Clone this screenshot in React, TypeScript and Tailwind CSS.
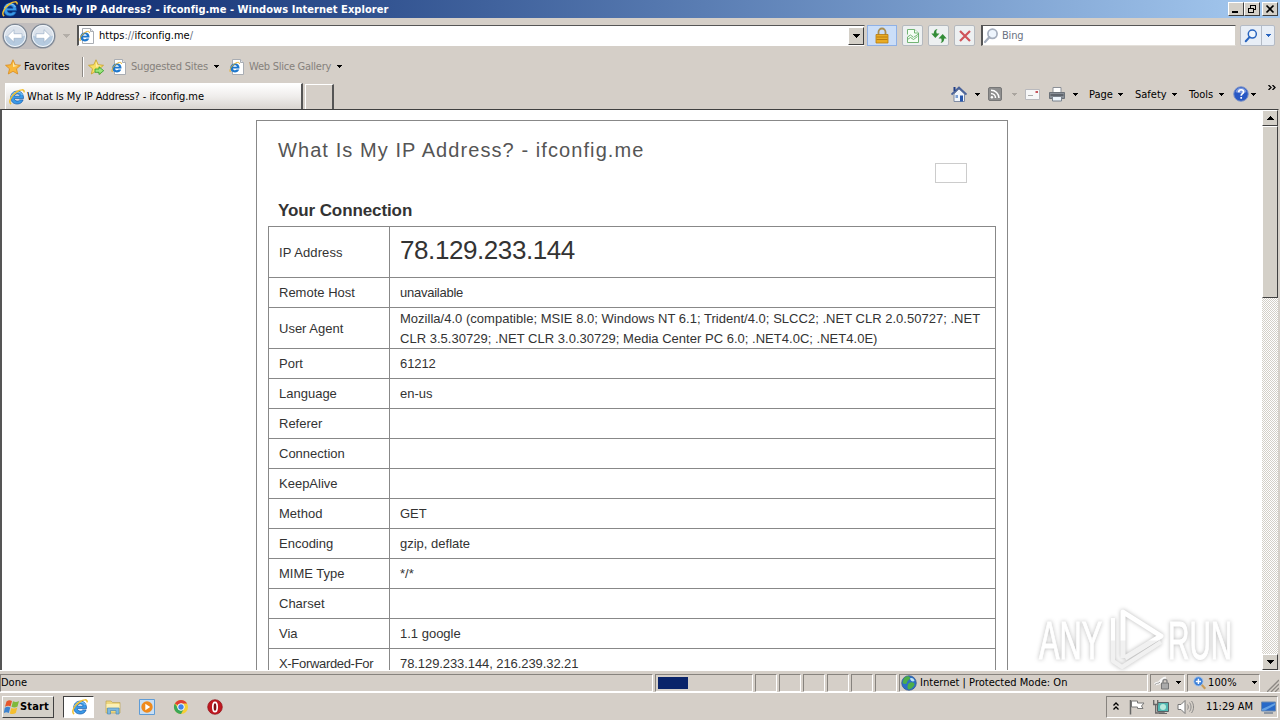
import React from 'react';

const rows = [
  { label: 'Remote Host', value: 'unavailable', valueClass: 'tracking-[-0.25px]' },
  {
    label: 'User Agent',
    value:
      'Mozilla/4.0 (compatible; MSIE 8.0; Windows NT 6.1; Trident/4.0; SLCC2; .NET CLR 2.0.50727; .NET CLR 3.5.30729; .NET CLR 3.0.30729; Media Center PC 6.0; .NET4.0C; .NET4.0E)',
    valueClass: 'tracking-[0.02px]',
    tall: true
  },
  { label: 'Port', value: '61212', valueClass: 'tracking-[-0.1px]' },
  { label: 'Language', value: 'en-us' },
  { label: 'Referer', value: '' },
  { label: 'Connection', value: '' },
  { label: 'KeepAlive', value: '' },
  { label: 'Method', value: 'GET' },
  { label: 'Encoding', value: 'gzip, deflate' },
  { label: 'MIME Type', value: '*/*' },
  { label: 'Charset', value: '' },
  { label: 'Via', value: '1.1 google' },
  {
    label: 'X-Forwarded-For',
    value: '78.129.233.144, 216.239.32.21',
    labelClass: 'tracking-[-0.32px]',
    valueClass: 'tracking-[-0.08px]'
  }
];

const IELogo = ({ className = '' }: { className?: string }) => (
  <svg viewBox="0 0 16 16" className={`shrink-0 ${className}`}>
    <path d="M14.500 9.600H5.300c.2 1.600 1.400 2.500 3 2.500 1.100 0 1.900-.4 2.400-1.200h3.400c-.9 2.700-3 4.100-5.900 4.100-3.900 0-6.500-2.600-6.500-6.400s2.700-6.500 6.600-6.500c4 0 6.400 2.900 6.200 7.500zM5.500 7.200H11C10.800 5.700 9.800 4.900 8.300 4.900S5.700 5.700 5.500 7.200z" fill="#3a9ae8" stroke="#1458a8" strokeWidth=".7" />
    <path d="M2.500 7c.8-2.600 2.900-4 5.700-4 2.500 0 4.200 1 5.200 3" fill="none" stroke="#8fd0fa" />
    <path d="M2.200 15C-1 13.500 2 6.500 7.500 3 11.500.4 15.800-.2 15 3.400" fill="none" stroke="#f1bf30" strokeWidth="1.500" />
  </svg>
);

const IEPage = () => (
  <svg viewBox="0 0 16 16" className="w-4 h-4 shrink-0">
    <path d="M3.500.5h8l3 3v12h-11z" fill="#fff" stroke="#a9adb3" />
    <path d="M11.500.5v3h3" fill="#e4e7ec" stroke="#a9adb3" />
    <path d="M10.500 9.500H4c.1 1.200.9 1.800 1.900 1.800.8 0 1.300-.3 1.600-.8h2.700c-.6 1.900-2.200 2.900-4.300 2.900-2.800 0-4.700-1.700-4.700-4.400s1.900-4.500 4.800-4.500c2.900 0 4.700 1.900 4.500 5zM4.100 7.800h3.800c-.1-.9-.8-1.500-1.900-1.500S4.300 6.900 4.100 7.800z" fill="#1f78cc" />
    <path d="M1.300 13C0 10.500 3 6 7 3.900c2-.9 3.800-.7 3.400 1" fill="none" stroke="#e6b02a" />
  </svg>
);

const Caret = ({ className = '' }: { className?: string }) => (
  <svg viewBox="0 0 5 3" className={`w-[5px] h-[3px] shrink-0 ${className}`} shapeRendering="crispEdges">
    <path d="M0 0h5v1H4v1H3v1H2V2H1V1H0z" fill="currentColor" />
  </svg>
);

const WideCaret = ({ className = '' }: { className?: string }) => (
  <svg viewBox="0 0 7 4" className={`w-[7px] h-1 shrink-0 ${className}`} shapeRendering="crispEdges">
    <path d="M0 0h7v1H6v1H5v1H4v1H3V3H2V2H1V1H0z" fill="currentColor" />
  </svg>
);

const NavCircle = ({ flip = false }: { flip?: boolean }) => (
  <svg viewBox="0 0 26 26" className={`w-[26px] h-[26px] shrink-0 ${flip ? '-scale-x-100' : ''}`}>
    <circle cx="13" cy="13" r="11.700" fill="#b5cadf" stroke="#7e8793" strokeWidth="1.200" />
    <path d="M2.500 12.500a10.500 10.500 0 0 1 21 0c-6 2.500-15 2.500-21 0z" fill="#dbe2eb" />
    <circle cx="13" cy="13" r="10.500" fill="none" stroke="#f4f7fa" />
    <path d="M5.500 13l6.500-6.300v4h8v4.600h-8v4z" fill="#fff" stroke="#9eb2c8" strokeWidth=".7" />
  </svg>
);

const Star = ({ arrow = false }: { arrow?: boolean }) => (
  <svg viewBox="0 0 16 16" className="w-4 h-4 shrink-0">
    <path d="M8 .8l2.200 4.900 5.300.6-4 3.500 1.200 5.200L8 12.300 3.300 15l1.200-5.200-4-3.500 5.300-.6z" fill={arrow ? '#f7df62' : '#f9b73a'} stroke={arrow ? '#c5a02a' : '#d98a1e'} strokeWidth=".8" />
    <path d="M8 2.500l1.500 3.800 3.500.5-5 1.200z" fill="#fde9a8" />
    {arrow && <path d="M7 10h4V7.800l4.700 3.900L11 15.500v-2.200H7z" fill="#9be57c" stroke="#2d9a2a" strokeWidth=".8" />}
  </svg>
);

const Glass = ({ className = '' }: { className?: string }) => (
  <svg viewBox="0 0 16 16" className={`w-4 h-4 shrink-0 ${className}`} fill="none" stroke="currentColor">
    <circle cx="9.500" cy="5.800" r="4.600" strokeWidth="1.700" fill="#eef5fd" />
    <path d="M6.300 9.200L2 14" strokeWidth="2.300" strokeLinecap="round" />
  </svg>
);

const ToolButton = ({ children }: { children: React.ReactNode }) => (
  <div className="w-[21px] h-[21px] ml-[5px] shrink-0 flex items-center justify-center rounded-[2px] border border-[#b5b9be] bg-[#edf0f1]">
    {children}
  </div>
);

const TitleBar = () => (
  <div className="h-[18px] shrink-0 flex items-center pl-[2px] pr-[2px] bg-linear-to-r from-[#0a246a] to-[#a6caf0]">
    <IELogo className="w-4 h-4" />
    <span className="ml-[2px] pt-px text-[11px] leading-[17px] font-bold text-white tracking-[0.045px] whitespace-nowrap">
      What Is My IP Address? - ifconfig.me - Windows Internet Explorer
    </span>
    <div className="ml-auto flex">
      {['min', 'max', 'close'].map((kind) => (
        <div
          key={kind}
          className={`w-4 h-[14px] bg-[#d4d0c8] border border-t-white border-l-white border-b-[#404040] border-r-[#404040] ${kind === 'close' ? 'ml-[2px]' : ''}`}
        >
          <svg viewBox="0 0 14 12" className="w-[14px] h-3" fill="none" stroke="#000" shapeRendering="crispEdges">
            {kind === 'min' && <path d="M3 9h6" strokeWidth="2" />}
            {kind === 'max' && <path d="M5 2h6M5.500 2v3M10.500 2v5M8 6.500h3M3 5h6M3.500 5v5M8.500 5v5M3 9.500h6" />}
            {kind === 'close' && <path d="M3.500 2.500l7 7M10.500 2.500l-7 7" strokeWidth="1.700" shapeRendering="auto" />}
          </svg>
        </div>
      ))}
    </div>
  </div>
);

const AddressRow = () => (
  <div className="h-[35px] shrink-0 flex items-center pl-[2px] pr-[6px]">
    <div className="flex gap-[2px] rounded-full bg-[#c1bdbd]">
      <NavCircle />
      <NavCircle flip />
    </div>
    <WideCaret className="ml-[7px] text-[#b3aea8]" />
    <div className="ml-[7px] w-[788px] h-[21px] shrink-0 flex items-center bg-white border border-t-[#555] border-l-2 border-l-[#555] border-b-white border-r-[#d4d0c8]">
      <IEPage />
      <span className="ml-1 pt-[2px] text-[11px] tracking-[-0.01px]">
        https<span className="text-gray-500">://</span>ifconfig.me<span className="text-gray-500">/</span>
      </span>
      <div className="ml-auto w-4 h-[18px] flex items-center justify-center bg-[#d4d0c8] border border-t-white border-l-white border-b-[#404040] border-r-[#404040]">
        <WideCaret />
      </div>
    </div>
    <div className="ml-[2px] w-[30px] h-[21px] shrink-0 flex items-center justify-center border border-[#8fb1e6] bg-[#cbdef8]">
      <svg viewBox="0 0 16 18" className="w-4 h-[18px]">
        <path d="M4.500 8V5a3.500 3.500 0 0 1 7 0v3" fill="none" stroke="#a98e53" strokeWidth="1.800" />
        <path d="M2 7.500h12V16H2z" fill="#e9ac25" stroke="#b67b12" strokeWidth=".8" />
        <path d="M2.500 10h11M2.500 12.500h11" stroke="#b97c10" />
      </svg>
    </div>
    <ToolButton>
      <svg viewBox="0 0 14 16" className="w-[14px] h-4" fill="#f6fff5" stroke="#64ab65" strokeWidth=".9">
        <path d="M1.500 6.500v-5h7l4 3.500v3" />
        <path d="M8.500 1.500V5h4" />
        <path d="M1.500 9l3-2 3 2.500L12.500 6v8.500h-11z" />
        <path d="M1.500 11.500l3-2 3 2 4-3" />
      </svg>
    </ToolButton>
    <ToolButton>
      <svg viewBox="0 0 16 16" className="w-4 h-4 shrink-0" fill="#328c37">
        <path d="M6.500 1C4.900 2.500 5.200 4 5.800 5.500h2.700L4.300 10 .3 5.500h2.500C2.600 3.200 4 1.500 6.500 1z" />
        <path d="M9.500 15c1.600-1.500 1.300-3 .7-4.500H7.500L11.700 6l4 4.500h-2.500c.2 2.300-1.200 4-3.700 4.500z" />
      </svg>
    </ToolButton>
    <ToolButton>
      <svg viewBox="0 0 14 14" className="w-[14px] h-[14px]">
        <path d="M2 2l10 10M12 2L2 12" stroke="#d0545a" strokeWidth="2.200" />
      </svg>
    </ToolButton>
    <div className="ml-[6px] w-[255px] h-[21px] shrink-0 flex items-center bg-white border border-t-[#555] border-l-2 border-l-[#555] border-b-[#e4e0da] border-r-[#d4d0c8]">
      <Glass className="text-[#a5aebd]" />
      <span className="ml-[3px] pt-[2px] text-[11px] text-gray-500 tracking-[-0.2px]">Bing</span>
    </div>
    <div className="ml-[4px] w-[35px] h-[21px] shrink-0 flex rounded-[2px] border border-[#b4bbc6] bg-[#e8eef6] text-[#2864bf]">
      <div className="w-[21px] flex items-center justify-center border-r border-[#b4bbc6]">
        <Glass className="w-[14px] h-[14px]" />
      </div>
      <div className="flex-1 flex items-center justify-center">
        <Caret />
      </div>
    </div>
  </div>
);

const FavoritesRow = () => (
  <div className="h-[27px] shrink-0 flex items-center pl-[5px] text-[11px]">
    <Star />
    <span className="ml-[3px] pt-px w-[46px] tracking-[0.1px] whitespace-nowrap">Favorites</span>
    <div className="ml-[12px] w-[2px] h-5 border-l border-[#8d8984] bg-white" />
    <div className="ml-1">
      <Star arrow />
    </div>
    <div className="ml-[7px] flex items-center text-[#85817c]">
      <IEPage />
      <span className="ml-[4px] pt-[2px] w-[78px] whitespace-nowrap tracking-[-0.2px]">Suggested Sites</span>
      <Caret className="ml-[5px] text-black" />
      <div className="w-[10px]" />
      <IEPage />
      <span className="ml-[4px] pt-[2px] w-[82px] whitespace-nowrap tracking-[-0.25px]">Web Slice Gallery</span>
      <Caret className="ml-[6px] text-black" />
    </div>
  </div>
);

const TabRow = () => (
  <div className="h-[29px] shrink-0 flex items-start pl-[5px] pt-[3px] text-[11px]">
    <div className="w-[298px] h-[26px] flex items-center pl-[3px] bg-linear-to-b from-white via-[#efedeb] to-[#d9d5d0] border-t border-l border-white border-r-2 border-r-[#555]">
      <IELogo className="w-4 h-4" />
      <span className="ml-[2px] pt-px whitespace-nowrap tracking-[-0.08px]">What Is My IP Address? - ifconfig.me</span>
    </div>
    <div className="ml-[2px] mt-[1px] w-[29px] h-[25px] border-t border-l border-white border-r-2 border-r-[#555]" />
    <div className="ml-auto h-[22px] flex items-center">
      <svg viewBox="0 0 16 16" className="w-4 h-4">
        <path d="M3 8v7.500h10.500V8L8 3z" fill="#f1f5fb" stroke="#7f8ba3" />
        <path d="M.5 8.500L8 1.500l7.500 7" fill="none" stroke="#49629a" strokeWidth="1.800" />
        <path d="M2.500 1h2v4h-2z" fill="#1f3d86" />
        <path d="M9 9.500h3v6H9z" fill="#2756ac" />
        <path d="M4.500 9h2.500v3H4.500z" fill="#7ca0d5" />
      </svg>
      <Caret className="ml-2" />
      <svg viewBox="0 0 14 14" className="ml-2 w-[14px] h-[14px]">
        <rect x=".5" y=".5" width="13" height="13" rx="1.500" fill="#8f8f8f" stroke="#777" />
        <path d="M3 6.500a4.500 4.500 0 0 1 4.500 4.500M3 3.200a8 8 0 0 1 8 7.800" fill="none" stroke="#fff" strokeWidth="1.500" />
        <circle cx="3.900" cy="10.200" r="1.200" fill="#fff" />
      </svg>
      <Caret className="ml-[10px] text-[#aaa59f]" />
      <svg viewBox="0 0 15 11" className="ml-2 w-[15px] h-[11px]">
        <path d="M.5.500h14v10H.5z" fill="#f7f7f8" stroke="#b9b9bd" />
        <path d="M10.500 2h2.500v2h-2.500z" fill="#c6545c" />
        <path d="M3 6.500h5" stroke="#aaa" />
      </svg>
      <svg viewBox="0 0 16 16" className="ml-[9px] w-4 h-4">
        <path d="M4 7V1.500h8V7" fill="#fff" stroke="#8b8f96" />
        <path d="M.5 6.500h15v6H.5z" fill="#8a9098" stroke="#6b7178" />
        <path d="M1.500 9h13" stroke="#50565e" strokeWidth="1.500" />
        <path d="M3.500 10.500h9v4.500h-9z" fill="#eef5fc" stroke="#7a828c" />
      </svg>
      <Caret className="ml-2" />
      <span className="ml-[11px] pt-[2px] w-[25px]">Page</span>
      <Caret className="ml-[4px]" />
      <span className="ml-[12px] pt-[2px] w-[33px]">Safety</span>
      <Caret className="ml-[4px]" />
      <span className="ml-[12px] pt-[2px] w-[26px]">Tools</span>
      <Caret className="ml-[4px]" />
      <svg viewBox="0 0 16 16" className="ml-[9px] w-4 h-4">
        <circle cx="8" cy="8" r="7.300" fill="#2858c4" stroke="#8296c7" />
        <path d="M2.500 6a5.700 5.700 0 0 1 11 0c-3 1.500-8 1.500-11 0z" fill="#7897df" />
        <path d="M5.700 6.200c0-3.200 4.900-3.200 4.900-.3 0 1.800-2.400 1.800-2.400 3.800M8.200 11v1.800" fill="none" stroke="#fff" strokeWidth="1.700" />
      </svg>
      <Caret className="ml-[2px]" />
      <svg viewBox="0 0 8 5" className="ml-[12px] mr-1 mb-[13px] w-2 h-[5px]" fill="none" stroke="#000" strokeWidth="1.300">
        <path d="M.5 0L3 2.500.5 5M4.500 0L7 2.500 4.500 5" />
      </svg>
    </div>
  </div>
);

const ScrollButton = ({ up = false }: { up?: boolean }) => (
  <div className="h-4 shrink-0 flex items-center justify-center bg-[#d4d0c8] border border-t-white border-l-white border-b-[#404040] border-r-[#404040]">
    <WideCaret className={up ? 'rotate-180' : ''} />
  </div>
);

const Scrollbar = () => (
  <div className="w-4 shrink-0 flex flex-col bg-[repeating-conic-gradient(#ffffff_0_25%,#d4d0c8_0_50%)] bg-[length:2px_2px]">
    <ScrollButton up />
    <div className="h-[172px] shrink-0 bg-[#d4d0c8] border border-t-white border-l-white border-b-[#404040] border-r-[#404040]" />
    <div className="flex-1" />
    <ScrollButton />
  </div>
);

const Watermark = () => (
  <svg viewBox="0 0 210 75" className="absolute left-[1030px] top-[600px] w-[210px] h-[75px] drop-shadow-[0_0_2px_rgba(0,0,0,0.28)]">
    <defs>
      <linearGradient id="wm" x1="0" y1="0" x2="0" y2="75" gradientUnits="userSpaceOnUse">
        <stop offset="0.53" stopColor="#ffffff" />
        <stop offset="0.55" stopColor="#f1f1f1" />
      </linearGradient>
    </defs>
    <g fill="url(#wm)" stroke="url(#wm)" strokeWidth="1" className="font-['Liberation_Sans']" fontSize="53">
      <text transform="translate(9 59) scale(.58 1)">ANY</text>
      <text transform="translate(138 59) scale(.56 1)">RUN</text>
    </g>
    <g fill="none" stroke="url(#wm)" strokeLinejoin="round">
      <path d="M83 18v43l9 6 39-25" strokeWidth="4" />
      <path d="M93 58V12l38 24-36 22" strokeWidth="5" />
    </g>
  </svg>
);

const PageContent = () => (
  <div className="flex-1 overflow-hidden">
    <div className="ml-[254px] mt-[10px] w-[752px] h-[700px] border border-[#888] px-[11px] font-['Liberation_Sans',Arial,sans-serif] text-[#333]">
      <div className="flex h-[76px]">
        <h1 className="pl-[10px] pt-[16px] text-[20px] leading-[26px] text-[#555] tracking-[1.08px] whitespace-nowrap">
          What Is My IP Address? - ifconfig.me
        </h1>
        <div className="ml-auto mr-[29px] mt-[42px] w-8 h-5 border border-[#ccc]" />
      </div>
      <h2 className="pl-[10px] h-[29px] text-[17px] leading-[28px] font-bold text-[#333] tracking-[-0.1px] whitespace-nowrap">
        Your Connection
      </h2>
      <table className="w-[728px] table-fixed border-collapse text-[13px] leading-5">
        <tbody>
          <tr className="h-[51px]">
            <td className="w-[121px] border border-[#888] p-0 pt-px pl-[10px] tracking-[0.1px]">IP Address</td>
            <td className="border border-[#888] p-0 pl-[10px] pb-[5px] text-[26px] leading-8 tracking-[-0.42px]">78.129.233.144</td>
          </tr>
          {rows.map((row) => (
            <tr key={row.label} className={row.tall ? 'h-[41px]' : 'h-[30px]'}>
              <td className={`border border-[#888] p-0 pl-[10px] whitespace-nowrap ${row.tall ? 'pt-px' : ''} ${row.labelClass ?? ''}`}>
                {row.label}
              </td>
              <td className={`border border-[#888] p-0 pl-[10px] ${row.valueClass ?? ''}`}>
                <div className={row.tall ? 'pt-px -mb-px' : ''}>{row.value}</div>
              </td>
            </tr>
          ))}
        </tbody>
      </table>
    </div>
  </div>
);

const sunken = 'h-[18px] border border-t-[#87837e] border-l-[#87837e] border-b-white border-r-white';

const StatusBar = () => (
  <div className="h-[23px] shrink-0 flex items-center gap-[2px] pt-[2px] border-t border-b border-white text-[11px]">
    <div className={`${sunken} w-[653px] flex items-center pt-[2px]`}>Done</div>
    <div className={`${sunken} w-[98px] pl-[2px] pt-[2px]`}>
      <div className="w-[30px] h-3 bg-[#0a246a]" />
    </div>
    {[0, 1, 2, 3, 4, 5].map((i) => (
      <div key={i} className={`${sunken} w-[22px]`} />
    ))}
    <div className={`${sunken} w-[249px] flex items-center pl-px`}>
      <svg viewBox="0 0 16 16" className="w-4 h-4 shrink-0">
        <circle cx="8" cy="8" r="7.300" fill="#2c6fc6" stroke="#31558c" strokeWidth=".7" />
        <path d="M3 3c3-2.500 5-2 6-.5S6 5.500 6 7.500 3 9 1.500 8zM8 8c3-1.500 5-.5 5.500 1S10 14.500 8 14.500 6 10 8 8z" fill="#4dae48" />
        <path d="M9 3.500c2-1 4 0 4.500 2.500-1.500 1-4 .5-4.500-2.500z" fill="#bde3f5" />
      </svg>
      <span className="ml-[3px] pt-[2px] whitespace-nowrap tracking-[0.02px]">Internet | Protected Mode: On</span>
    </div>
    <div className={`${sunken} w-[35px] flex items-center`}>
      <svg viewBox="0 0 18 16" className="ml-[3px] w-[18px] h-4">
        <path d="M1 9.500c2-2 3.500-.5 5-2.500s3-3.500 6-4" fill="none" stroke="#f8f8f8" strokeWidth="3" />
        <path d="M1 9.500c2-2 3.500-.5 5-2.500" fill="none" stroke="#999" />
        <path d="M7.500 8h7v6h-7z" fill="#aaa" stroke="#777" />
        <path d="M9 8V6.500a2 2 0 0 1 4 0V8" fill="none" stroke="#888" strokeWidth="1.500" />
      </svg>
      <Caret className="ml-1" />
    </div>
    <div className={`${sunken} w-[73px] flex items-center`}>
      <svg viewBox="0 0 16 16" className="ml-[5px] w-[14px] h-[14px] shrink-0">
        <path d="M9 9l5 5.500" stroke="#c99c58" strokeWidth="2.500" />
        <circle cx="6.200" cy="6.200" r="5.300" fill="#3c7fd7" stroke="#a9c8ee" />
        <path d="M6.200 3.200v6M3.200 6.200h6" stroke="#fff" strokeWidth="1.700" />
      </svg>
      <span className="ml-px pt-[2px] w-[29px] tracking-[0.1px]">100%</span>
      <Caret className="ml-[15px]" />
    </div>
    <svg viewBox="0 0 12 14" className="w-3 h-[14px] mt-1 ml-[5px]" stroke="#8d8984" strokeWidth="1.300">
      <path d="M0 14L12 2M4 14l8-8M8 14l4-4" />
    </svg>
  </div>
);

const Taskbar = () => (
  <div className="h-[27px] shrink-0 flex items-start pl-[2px] pt-[3px]">
    <div className="w-[52px] h-[22px] flex items-center bg-[#d4d0c8] border border-t-white border-l-white border-b-[#404040] border-r-[#404040]">
      <svg viewBox="0 0 16 16" className="ml-px w-4 h-4 shrink-0">
        <path d="M2.500 2.500C4.500 1 6 1 8 2L6.500 7.500C5 6.500 3 6.700 1 7.800z" fill="#e5572c" />
        <path d="M9 2.300c2 1 4 1 6-.3l-1.500 5.500c-2 1.300-4 1.300-6 .300z" fill="#7fb93c" />
        <path d="M.8 8.800c2-1.200 3.700-1.300 5.500-.3L4.800 14c-1.800-1-3.500-.9-5 .1z" fill="#3d83cf" />
        <path d="M7.300 8.900c2 1 4 1 6-.3l-1.500 5.500c-2 1.300-4 1.300-6 .300z" fill="#f4be2e" />
      </svg>
      <span className="pt-px text-[11px] font-bold tracking-[0.15px]">Start</span>
    </div>
    <div className="ml-[9px] w-[31px] h-[22px] flex items-center justify-center bg-white border border-t-[#404040] border-l-[#404040] border-b-white border-r-white">
      <IELogo className="w-4 h-4 ml-0.5" />
    </div>
    <div className="ml-[11px] mt-[3px] flex gap-[18px] items-center">
      <svg viewBox="0 0 16 16" className="w-4 h-4">
        <path d="M1 2h5l1.500 1.500H15V14H1z" fill="#eed77f" stroke="#bda554" strokeWidth=".7" />
        <path d="M1.500 5h13v4h-13z" fill="#fbf0b5" />
        <path d="M2.500 15V9h11.500v6h-3v-3.500H5.500V15z" fill="#7db8df" stroke="#4d8db8" strokeWidth=".7" />
      </svg>
      <svg viewBox="0 0 16 16" className="w-4 h-4">
        <path d="M.5.500h15v15H.5z" fill="#c8dff5" stroke="#5f9cd6" />
        <circle cx="8" cy="8" r="5.700" fill="#ef8a1d" />
        <path d="M6.300 4.700L11.200 8l-4.900 3.300z" fill="#fff" />
      </svg>
      <svg viewBox="0 0 16 16" className="w-4 h-4">
        <circle cx="8" cy="8" r="7" fill="#f6cf35" />
        <path d="M8 8L1.900 4.500A7 7 0 0 1 14.100 4.500H8z" fill="#df3e34" />
        <path d="M1.900 4.500A7 7 0 0 0 8 15l3-5.500H5z" fill="#3ba757" />
        <circle cx="8" cy="8" r="3.300" fill="#4184ea" stroke="#fff" strokeWidth="1" />
      </svg>
      <svg viewBox="0 0 16 16" className="w-4 h-4">
        <circle cx="8" cy="8" r="7.300" fill="#c01820" stroke="#8f1118" strokeWidth=".7" />
        <ellipse cx="8" cy="8" rx="2.200" ry="4.700" fill="#7d1015" stroke="#fff" strokeWidth="1.700" />
      </svg>
    </div>
    <div className="ml-auto mr-[2px] w-[172px] h-[22px] flex items-center border border-t-[#87837e] border-l-[#87837e] border-b-white border-r-white">
      <svg viewBox="0 0 6 8" className="ml-[6px] mb-[3px] w-[6px] h-2" fill="none" stroke="#000" strokeWidth="1.300">
        <path d="M.5 3.500L3 1l2.500 2.500M.5 7.500L3 5l2.500 2.500" />
      </svg>
      <svg viewBox="0 0 16 16" className="ml-[10px] w-4 h-4">
        <path d="M1.500 1v14.500" stroke="#666" strokeWidth="1.500" />
        <path d="M2.500 2h6v2H15l-2.500 3L14 9.500H8.500V8h-6z" fill="#fff" stroke="#777" />
      </svg>
      <svg viewBox="0 0 16 16" className="ml-[8px] w-4 h-4">
        <path d="M4.500 3.500h11v9h-11z" fill="#51b8b3" stroke="#586064" />
        <circle cx="10" cy="8" r="3" fill="#b8eadd" />
        <path d="M.7 1v4.500h4V1M2.700 5.500V14h9" fill="none" stroke="#666" strokeWidth="1.300" />
        <path d="M6 14.500h8" stroke="#666" />
      </svg>
      <svg viewBox="0 0 18 16" className="ml-[8px] w-[18px] h-4" fill="none" stroke="#777">
        <path d="M1 5.500h3l4-4v13l-4-4H1z" fill="#fff" />
        <path d="M10.500 5.500c1 1.500 1 3.500 0 5M12.500 3.500c2 2.500 2 6.500 0 9M14.500 2c2.700 3.500 2.700 8.500 0 12" strokeWidth=".8" />
      </svg>
      <span className="ml-[11px] pt-px w-[48px] text-[11px] whitespace-nowrap">11:29 AM</span>
      <svg viewBox="0 0 15 13" className="ml-[7px] w-[15px] h-[13px] shrink-0">
        <path d="M.5 1h14v9H.5z" fill="#2769c8" stroke="#6d89ad" />
        <path d="M1 8l13-6v2L4 9.500H1z" fill="#64a1e3" />
        <path d="M3 12h9" stroke="#768497" strokeWidth="1.500" />
      </svg>
    </div>
  </div>
);

export default function App() {
  return (
    <div className="relative w-[1280px] h-[720px] overflow-hidden flex flex-col bg-[#d5cfc8] text-black font-[Tahoma,'DejaVu_Sans_Condensed','DejaVu_Sans',sans-serif]">
      <TitleBar />
      <AddressRow />
      <FavoritesRow />
      <TabRow />
      <div className="h-[561px] shrink-0 flex mr-px bg-white border-t border-l-2 border-r border-t-[#404040] border-l-[#555] border-r-[#d4d0c8]">
        <PageContent />
        <Scrollbar />
      </div>
      <StatusBar />
      <Taskbar />
      <Watermark />
    </div>
  );
}
